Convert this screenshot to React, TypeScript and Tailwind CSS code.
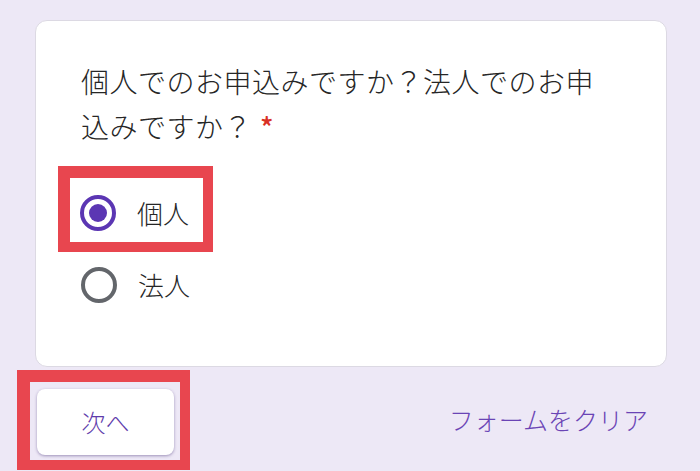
import React from "react";

type RadioProps = { checked?: boolean };

const Radio = ({ checked }: RadioProps) => (
  <span
    className={`flex h-[36px] w-[36px] shrink-0 items-center justify-center rounded-full border-[4px] ${
      checked ? "border-[#5b36b3]" : "border-[#63666b]"
    }`}
  >
    {checked && <span className="h-[18px] w-[18px] rounded-full bg-[#5b36b3]" />}
  </span>
);

const App = () => {
  return (
    <div
      className="h-[471px] w-[700px] overflow-hidden bg-[#ede8f6] font-light text-[#262626]"
      style={{ fontFamily: '"Noto Sans CJK JP", "Noto Sans", sans-serif' }}
    >
      {/* Question card */}
      <div className="ml-[35px] mt-[20px] h-[347px] w-[632px] rounded-[12px] border border-[#dcd9e3] bg-white pl-[45px] pt-[38px]">
        <h2 className="w-[530px] text-[28px] leading-[45px] tracking-[0.5px]">
          個人でのお申込みですか？法人でのお申込みですか？<span className="pl-[8px] font-medium text-[#d93025]">*</span>
        </h2>

        <div className="mt-[17px] flex flex-col">
          {/* Highlighted option */}
          <label className="-ml-[23px] flex w-fit items-center gap-[21px] border-b-[10px] border-l-[12px] border-r-[10px] border-t-[12px] border-[#e8464f] pb-[11px] pl-[10px] pr-[14px] pt-[17px]">
            <Radio checked />
            <span className="text-[26px] leading-[36px]">個人</span>
          </label>

          <label className="mt-[15px] flex items-center gap-[21px]">
            <Radio />
            <span className="text-[26px] leading-[36px]">法人</span>
          </label>
        </div>
      </div>

      {/* Footer actions */}
      <div className="mt-[3px] flex items-center justify-between pl-[17px] pr-[52px]">
        <div className="border-b-[10px] border-l-[13px] border-r-[10px] border-t-[12px] border-[#e8464f] pb-[5px] pl-[7px] pr-[6px] pt-[7px]">
          <button className="flex h-[66px] w-[137px] items-center justify-center rounded-[8px] bg-white text-[24px] text-[#5e3bab] shadow-[0_1px_3px_rgba(60,40,110,0.45)]">
            次へ
          </button>
        </div>
        <span className="text-[25px] text-[#6a44b5]">フォームをクリア</span>
      </div>
    </div>
  );
};

export default App;
